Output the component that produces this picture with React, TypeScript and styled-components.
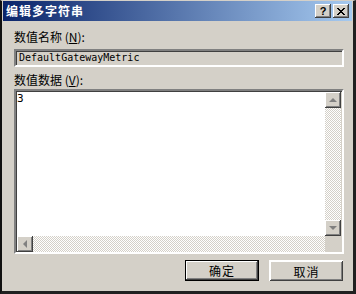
import React from "react";
import styled, { createGlobalStyle } from "styled-components";

const Global = createGlobalStyle`
  html, body { margin: 0; padding: 0; background: #000; }
  * { box-sizing: border-box; }
`;

const face = "#d4d0c8";
const cjk = `"Noto Sans CJK SC", "Noto Sans", sans-serif`;

const Window = styled.div`
  width: 356px;
  height: 294px;
  background: ${face};
  border-style: solid;
  border-width: 1px 3px 3px 2px;
  border-color: ${face} #202020 #202020 #101010;
  padding: 0 1px 0 1px;
  font-family: ${cjk};
  font-size: 12px;
  color: #000;
`;

const TitleBar = styled.div`
  height: 20px;
  display: flex;
  align-items: center;
  padding: 0 3px 0 3px;
  background: linear-gradient(to right, #0a246a, #a6caf0);
`;

const Title = styled.div`
  flex: 1;
  color: #fff;
  font-weight: bold;
  font-size: 12px;
  letter-spacing: 1px;
  line-height: 14px;
`;

const CapButton = styled.div<{ $gap?: number }>`
  width: 16px;
  height: 14px;
  margin-left: ${(p) => p.$gap ?? 0}px;
  background: ${face};
  display: flex;
  align-items: center;
  justify-content: center;
  box-shadow: inset -1px -1px #404040, inset 1px 1px #fff, inset -2px -2px #808080;
  font-family: "Liberation Sans", Arial, sans-serif;
  font-weight: bold;
  font-size: 11px;
  line-height: 12px;
`;

const Body = styled.div`
  margin-left: 11px;
  width: 330px;
  padding-top: 9px;
  display: flex;
  flex-direction: column;
`;

const Label = styled.div<{ $top?: number }>`
  height: 14px;
  line-height: 14px;
  margin-top: ${(p) => p.$top ?? 0}px;
  u { text-decoration: underline; }
`;

const Sunken = styled.div`
  border-style: solid;
  border-width: 2px;
  border-color: #808080 #fff #fff #808080;
  box-shadow: inset 1px 1px #404040, inset -1px -1px ${face};
`;

const Field = styled(Sunken)`
  margin-top: 5px;
  height: 18px;
  padding: 0 3px;
  background: ${face};
  font-family: "DejaVu Sans Mono", monospace;
  font-size: 10px;
  line-height: 14px;
`;

const Memo = styled(Sunken)`
  margin-top: 2px;
  height: 165px;
  background: #fff;
  display: grid;
  grid-template-columns: 1fr 16px;
  grid-template-rows: 1fr 16px;
  padding: 1px 1px 0 1px;
`;

const MemoText = styled.div`
  padding: 1px 0 0 0;
  font-family: "DejaVu Sans Mono", monospace;
  font-size: 11px;
  line-height: 12px;
`;

const VScroll = styled.div`
  display: flex;
  flex-direction: column;
`;

const HScroll = styled.div`
  display: flex;
`;

const Track = styled.div`
  flex: 1;
  background: repeating-conic-gradient(${face} 0 25%, #fff 0 50%) 0 0 / 2px 2px;
`;

const Arrow = styled.div`
  width: 16px;
  height: 16px;
  background: ${face};
  display: flex;
  align-items: center;
  justify-content: center;
  box-shadow: inset -1px -1px #404040, inset 1px 1px #fff, inset -2px -2px #808080;
`;

const Corner = styled.div`
  background: ${face};
`;

const ButtonRow = styled.div`
  margin-top: 6px;
  display: flex;
  justify-content: flex-end;
  gap: 10px;
  padding-right: 1px;
`;

const Button = styled.div<{ $default?: boolean }>`
  width: 74px;
  height: 21px;
  display: flex;
  align-items: center;
  justify-content: center;
  background: ${face};
  font-size: 12px;
  letter-spacing: 1px;
  border: 1px solid ${(p) => (p.$default ? "#000" : face)};
  box-shadow: inset -1px -1px #404040, inset 1px 1px #fff, inset -2px -2px #808080;
  ${(p) => (p.$default ? "" : "box-shadow: inset -1px -1px #404040, inset 1px 1px #fff, inset -2px -2px #808080; border-width: 0; border-top: 1px solid #fff; border-left: 1px solid #fff;")}
`;

const Tri = ({ dir }: { dir: "up" | "down" | "left" }) => {
  const pts =
    dir === "up" ? "1,5 9,5 5,1" : dir === "down" ? "1,1 9,1 5,5" : "5,1 5,9 1,5";
  const w = dir === "left" ? 6 : 10;
  const h = dir === "left" ? 10 : 6;
  return (
    <svg width={w} height={h} viewBox={`0 0 ${w} ${h}`}>
      <polygon points={pts} fill="#808080" />
    </svg>
  );
};

export default function App() {
  return (
    <>
      <Global />
      <Window>
        <TitleBar>
          <Title>编辑多字符串</Title>
          <CapButton>?</CapButton>
          <CapButton $gap={2}>
            <svg width="8" height="7" viewBox="0 0 8 7">
              <path d="M0 0 L7 7 M1 0 L8 7 M7 0 L0 7 M8 0 L1 7" stroke="#000" strokeWidth="1" />
            </svg>
          </CapButton>
        </TitleBar>
        <Body>
          <Label>
            数值名称 (<u>N</u>):
          </Label>
          <Field>DefaultGatewayMetric</Field>
          <Label $top={6}>
            数值数据 (<u>V</u>):
          </Label>
          <Memo>
            <MemoText>3</MemoText>
            <VScroll>
              <Arrow>
                <Tri dir="up" />
              </Arrow>
              <Track />
              <Arrow>
                <Tri dir="down" />
              </Arrow>
            </VScroll>
            <HScroll>
              <Arrow>
                <Tri dir="left" />
              </Arrow>
              <Track />
            </HScroll>
            <Corner />
          </Memo>
          <ButtonRow>
            <Button $default>确定</Button>
            <Button>取消</Button>
          </ButtonRow>
        </Body>
      </Window>
    </>
  );
}
